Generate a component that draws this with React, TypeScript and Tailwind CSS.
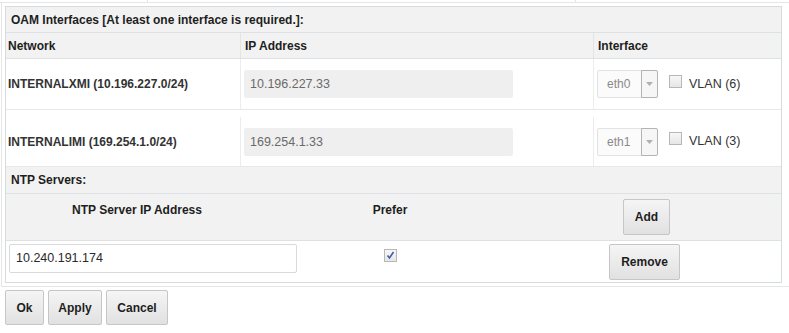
import React from "react";

function SelectBox({ value }: { value: string }) {
  return (
    <div className="flex h-[28px] w-[61px] rounded-[2px] border border-[#e2e2e2] bg-[#fbfbfb]">
      <span className="flex-1 pl-[9px] leading-[26px] text-[#8a8a8a]">{value}</span>
      <span className="flex w-[17px] items-center justify-center border border-[#b4b4b4] bg-[#f6f6f6] -my-px -mr-px rounded-r-[2px]">
        <svg width="7" height="4" viewBox="0 0 7 4">
          <path d="M0 0h7L3.5 4z" fill="#b0b0b0" />
        </svg>
      </span>
    </div>
  );
}

function CheckBox({ checked = false }: { checked?: boolean }) {
  return (
    <span className="flex h-[13px] w-[13px] items-center justify-center border border-[#b7b7b7] bg-gradient-to-b from-[#f7f7f7] to-[#e6e6e6]">
      {checked && (
        <svg width="9" height="9" viewBox="0 0 9 9">
          <path d="M1.5 4.5l2 2.5 4-6" fill="none" stroke="#3d5fa8" strokeWidth="1.6" />
        </svg>
      )}
    </span>
  );
}

function Btn({ label, className }: { label: string; className: string }) {
  return (
    <button
      className={`flex items-center justify-center rounded-[2px] border border-[#c6c6c6] bg-gradient-to-b from-[#f5f5f5] to-[#e1e1e1] text-[12px] font-bold text-[#1e1e1e] ${className}`}
    >
      {label}
    </button>
  );
}

const rows = [
  { net: "INTERNALXMI (10.196.227.0/24)", ip: "10.196.227.33", eth: "eth0", vlan: "VLAN (6)", tall: false },
  { net: "INTERNALIMI (169.254.1.0/24)", ip: "169.254.1.33", eth: "eth1", vlan: "VLAN (3)", tall: true },
];

export default function App() {
  return (
    <div className="h-[333px] w-[789px] overflow-hidden bg-white font-['Liberation_Sans',Arial,sans-serif] text-[12px] text-[#333]">
      {/* remnants of the row above */}
      <div className="flex h-[3px] border-b border-[#e6e6e6]">
        <div className="w-[148px] border-r border-[#e6e6e6]" />
        <div className="w-[428px] border-r border-[#e6e6e6]" />
      </div>

      <div className="ml-px border-b border-l border-[#e6e6e6] pb-[3px] pl-[3px] pt-[3px]">
        <div className="w-[777px] border border-[#d6dbe0]">
          {/* OAM section */}
          <div className="flex h-[26px] items-center border-b border-[#dde1e5] bg-[#f2f2f2] pl-[5px] font-bold text-[#1e1e1e]">
            OAM Interfaces [At least one interface is required.]:
          </div>
          <div className="flex h-[26px] border-b border-[#dde1e5] bg-[#f2f2f2] font-bold text-[#1e1e1e]">
            <div className="flex w-[235px] items-center border-r border-[#e4e4e4] pl-[2px]">Network</div>
            <div className="flex w-[353px] items-center border-r border-[#e4e4e4] pl-[4px]">IP Address</div>
            <div className="flex flex-1 items-center pl-[4px]">Interface</div>
          </div>
          {rows.map((r) => (
            <div
              key={r.net}
              className={`flex border-b border-[#e6e8eb] ${r.tall ? "h-[57px] pt-[7px]" : "h-[51px]"}`}
            >
              <div className="flex w-[235px] items-center border-r border-[#ececec] pl-[2px] font-bold text-[#333]">
                {r.net}
              </div>
              <div className="flex w-[353px] items-center border-r border-[#ececec] pl-[3px]">
                <div className="h-[28px] w-[269px] rounded-[2px] bg-[#efefef] pl-[6px] text-[12.5px] leading-[28px] text-[#6a6a6a]">
                  {r.ip}
                </div>
              </div>
              <div className="flex flex-1 items-center pl-[3px]">
                <SelectBox value={r.eth} />
                <span className="ml-[11px] -mt-[6px]">
                  <CheckBox />
                </span>
                <span className="ml-[7px] text-[12.5px] text-[#333]">{r.vlan}</span>
              </div>
            </div>
          ))}

          {/* NTP section */}
          <div className="flex h-[27px] items-center border-b border-[#dde1e5] bg-[#f2f2f2] pl-[5px] font-bold text-[#1e1e1e]">
            NTP Servers:
          </div>
          <div className="flex h-[47px] border-b border-[#dde1e5] bg-[#f2f2f2] font-bold text-[#1e1e1e]">
            <div className="w-[262px] pt-[7px] text-center">NTP Server IP Address</div>
            <div className="w-[244px] pt-[7px] text-center">Prefer</div>
            <div className="flex flex-1 items-center pl-[111px]">
              <Btn label="Add" className="h-[36px] w-[47px]" />
            </div>
          </div>
          <div className="flex h-[41px]">
            <div className="w-[290px] pl-[3px] pt-[3px]">
              <div className="h-[29px] w-[288px] rounded-[2px] border border-[#dadada] bg-white pl-[6px] text-[12.5px] leading-[27px] text-[#2a2a2a]">
                10.240.191.174
              </div>
            </div>
            <div className="w-[188px] pl-[88px] pt-[8px]">
              <CheckBox checked />
            </div>
            <div className="flex-1 pl-[125px] pt-[3px]">
              <Btn label="Remove" className="h-[36px] w-[71px]" />
            </div>
          </div>
        </div>
      </div>

      <div className="mt-[3px] flex gap-[4px] pl-[5px]">
        <Btn label="Ok" className="h-[35px] w-[39px]" />
        <Btn label="Apply" className="h-[35px] w-[54px]" />
        <Btn label="Cancel" className="h-[35px] w-[62px]" />
      </div>
    </div>
  );
}
